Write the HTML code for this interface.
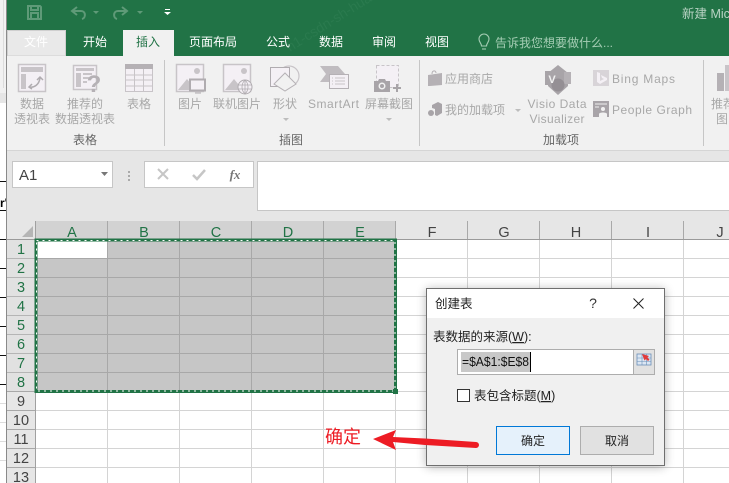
<!DOCTYPE html>
<html><head><meta charset="utf-8">
<style>
html,body{margin:0;padding:0;background:#fff;width:729px;height:483px;overflow:hidden}
svg{display:block;font-family:"Liberation Sans","Noto Sans CJK SC",sans-serif;font-size:12px}
.m{text-anchor:middle}
.r{fill:#a8a8a8}
.g{fill:#666}
.tab{fill:#fff;text-anchor:middle}
.ic{fill:#f4f0f5;stroke:#c8c4c8;stroke-width:1.5}
.if{fill:#c8c4c8;stroke:none}
.ch{font-size:14.5px;text-anchor:middle;fill:#217346}
.cn{font-size:14.5px;text-anchor:middle;fill:#444}
</style></head><body>
<svg width="729" height="483" viewBox="0 0 729 483" xmlns="http://www.w3.org/2000/svg">
<!-- left strip -->
<rect x="0" y="0" width="7" height="93" fill="#f1f1f1"/>
<rect x="3" y="0" width="1" height="88" fill="#dcdcdc"/>
<rect x="0" y="93" width="7" height="10" fill="#e6e6e6"/>
<g fill="#111"><rect x="0" y="181" width="7" height="1"/><rect x="0" y="210" width="7" height="1"/><rect x="0" y="239" width="7" height="1"/><rect x="0" y="268" width="7" height="1"/><rect x="0" y="297" width="7" height="1"/><rect x="0" y="326" width="7" height="1"/><rect x="0" y="355" width="7" height="1"/><rect x="0" y="384" width="7" height="1"/></g>
<g fill="#ddd"><rect x="0" y="403" width="7" height="1"/><rect x="0" y="422" width="7" height="1"/><rect x="0" y="441" width="7" height="1"/><rect x="0" y="460" width="7" height="1"/></g>
<text x="0" y="207" font-size="12" font-weight="bold" fill="#000">r'</text>
<rect x="6" y="0" width="1" height="483" fill="#8a8a8a"/>

<!-- title bar -->
<rect x="7" y="0" width="722" height="56" fill="#217346"/>
<g fill="none" stroke="#5f9a78" stroke-width="2">
<path d="M28 6h12l1 1v12H28z"/><path d="M31 6v4h7V6"/><path d="M31 19v-6h7v6"/>
<path d="M77 7l-5 4 5 4M72 11h9c5 0 5 7 1 8"/>
<path d="M122 7l5 4-5 4M127 11h-9c-5 0-5 7-1 8"/>
</g>
<path d="M93 11h6l-3 3zM137 11h6l-3 3z" fill="#5f9a78"/>
<path d="M165 9h5v1h-5zM164 12h7l-3.5 3z" fill="#fff"/>
<text x="682" y="18" fill="#b9d3c4" font-size="12.5">新建 Mic</text>
<text x="290" y="52" fill="#2a7a4e" font-size="14" transform="rotate(-32 290 52)">n1-csdn-sh-huang</text>

<!-- tabs -->
<rect x="7.500" y="30.500" width="58" height="25.500" fill="#e9e9e9" stroke="#cfcfcf"/>
<text x="36" y="46" class="tab">文件</text>
<rect x="123" y="30" width="51" height="26" fill="#f1f1f1"/>
<text x="148" y="46" class="m" fill="#217346">插入</text>
<text x="95" y="46" class="tab">开始</text>
<text x="213" y="46" class="tab">页面布局</text>
<text x="278" y="46" class="tab">公式</text>
<text x="331" y="46" class="tab">数据</text>
<text x="384" y="46" class="tab">审阅</text>
<text x="437" y="46" class="tab">视图</text>
<g fill="none" stroke="#a5cdb4" stroke-width="1.1"><path d="M481.500 46c0-3-2.500-3.500-2.500-7a5 5 0 0 1 10 0c0 3.500-2.500 4-2.500 7z"/><path d="M482 49h4"/></g>
<text x="495" y="47" fill="#a5cdb4">告诉我您想要做什么...</text>

<!-- ribbon -->
<rect x="7" y="56" width="722" height="94" fill="#f1f1f1"/>
<rect x="7" y="150" width="722" height="1" fill="#d5d5d5"/>
<g fill="#c6c6c6"><rect x="164" y="60" width="1" height="86"/><rect x="419" y="60" width="1" height="86"/><rect x="703" y="60" width="1" height="86"/></g>

<!-- pivot icon -->
<rect x="18.500" y="64.500" width="27" height="27" class="ic"/>
<rect x="21" y="67" width="22" height="5" class="if"/><rect x="21" y="74" width="5" height="15" class="if"/>
<path d="M29 87c5 1 10-2 11-9M37 80l3-3 3 3M32 84l-3 3 3 2" fill="none" stroke="#b0acb0" stroke-width="1.500"/>
<!-- recommended pivot -->
<rect x="73.500" y="65.500" width="23" height="24" class="ic"/>
<rect x="76" y="68" width="18" height="3" class="if"/><rect x="76" y="73" width="5" height="14" class="if"/><path d="M83 73h9v2h-9zM83 77h6v2h-6zM83 81h4v2h-4z" class="if"/>
<text x="94" y="92" class="m" font-size="24" font-weight="bold" fill="#b5b1b5">?</text>
<!-- table icon -->
<rect x="125.500" y="64.500" width="27" height="27" fill="#f4f0f5" stroke="#c8c4c8"/>
<rect x="125" y="64" width="28" height="5" fill="#b5b1b5"/>
<path d="M125 75h28M125 80h28M125 86h28M134.500 69v22M143.500 69v22" stroke="#c8c4c8" fill="none"/>
<!-- picture -->
<rect x="176.500" y="64.500" width="27" height="27" class="ic" stroke-width="1"/>
<circle cx="197" cy="71" r="3" class="if"/><path d="M178 90l9-11 9 11z" class="if"/>
<rect x="190" y="79.500" width="15" height="11" fill="#f4f0f5" stroke="#b0acb0" stroke-width="2"/><path d="M195 93h6" stroke="#b0acb0"/>
<!-- online pic -->
<rect x="223.500" y="64.500" width="27" height="27" class="ic" stroke-width="1"/>
<circle cx="244" cy="71" r="3" class="if"/><path d="M225 90l9-11 9 11z" class="if"/>
<circle cx="245" cy="87" r="7" fill="#f4f0f5" stroke="#b0acb0"/><path d="M238 85h14M238 89h14M245 80v14M245 80c-4 4-4 10 0 14M245 80c4 4 4 10 0 14" fill="none" stroke="#b0acb0" stroke-width=".8"/>
<!-- shapes -->
<circle cx="289" cy="76" r="10" fill="none" stroke="#c8c4c8" stroke-width="1.200"/>
<rect x="270.500" y="67.500" width="19" height="19" fill="#f4f0f5" stroke="#b0acb0"/>
<path d="M285 74l11 11-11 7-11-7z" fill="#f1f1f1" stroke="#b5b1b5" transform="translate(0 -1)"/>
<!-- smartart -->
<path d="M320 66h18l7 8-7 8h-18l6-8z" fill="#c0bcc0"/>
<rect x="329.500" y="74.500" width="19" height="14" fill="#f4f0f5" stroke="#b5b1b5"/><path d="M335 78h10M335 81h10M335 84h10M332 78h1M332 81h1M332 84h1" stroke="#c8c4c8"/>
<!-- screenshot -->
<rect x="376.500" y="65.500" width="22" height="22" fill="#f4f0f5" stroke="#c8c4c8" stroke-dasharray="3 2"/>
<path d="M374 81h4l1-2h6l1 2h4v11h-16z" fill="#a8a4a8"/><circle cx="382" cy="86" r="3.500" fill="#f1f1f1"/><circle cx="382" cy="86" r="2" fill="#a8a4a8"/>
<path d="M393 88h8M397 84v8" stroke="#a8a4a8" stroke-width="2"/>
<!-- store -->
<path d="M428 75l14-2v12l-12 1h-2z" fill="#b5b1b5"/><path d="M432 74c0-4 4-4 4-1" fill="none" stroke="#b5b1b5"/>
<!-- addins -->
<path d="M432 105l6-3 4 2v9l-5 3-2-1v-6l-3-1z" fill="#a8a4a8"/><circle cx="431" cy="113" r="3" fill="#a8a4a8"/>
<!-- visio -->
<path d="M558 65l10 8v13l-10 9-10-9V73z" fill="#a8a4a8"/>
<rect x="545" y="71" width="14" height="14" fill="#a8a4a8"/><rect x="564" y="72" width="7" height="12" fill="#b5b1b5"/><circle cx="558" cy="85" r="6.500" fill="#948f94"/>
<text x="552" y="83" class="m" font-size="11" font-weight="bold" fill="#f1f1f1">V</text>
<!-- bing -->
<rect x="593" y="70" width="16" height="16" fill="#d8d4d8"/><path d="M597 72l3 1v8l4-2-2-1-1-3 6 3v2l-7 4-3-2z" fill="#f4f0f5"/>
<!-- people -->
<rect x="593" y="101" width="16" height="16" fill="#a8a4a8"/><path d="M595 104h12M595 107h4" stroke="#f1f1f1"/><circle cx="603" cy="109" r="2" fill="#f1f1f1"/><path d="M599 117v-3c0-2 8-2 8 0v3z" fill="#f1f1f1"/>
<!-- right clipped -->
<rect x="717" y="73" width="7" height="18" fill="#b5b1b5"/><rect x="725" y="65" width="4" height="26" fill="#c8c4c8"/>

<text x="32" y="108" class="m r">数据</text><text x="32" y="123" class="m r">透视表</text>
<text x="85" y="108" class="m r">推荐的</text><text x="85" y="123" class="m r">数据透视表</text>
<text x="139" y="108" class="m r">表格</text>
<text x="190" y="108" class="m r">图片</text>
<text x="237" y="108" class="m r">联机图片</text>
<text x="285" y="108" class="m r">形状</text>
<text x="308" y="108" class="r" textLength="51" font-size="12">SmartArt</text>
<text x="389" y="108" class="m r">屏幕截图</text>
<path d="M283 118h6l-3 3zM386 118h6l-3 3zM515 109h6l-3 3z" fill="#bdbdbd"/>
<text x="445" y="83" class="r">应用商店</text>
<text x="445" y="114" class="r">我的加载项</text>
<text x="557" y="108" class="m r" textLength="59">Visio Data</text>
<text x="557" y="123" class="m r" textLength="55">Visualizer</text>
<text x="612" y="83" class="r" textLength="63">Bing Maps</text>
<text x="612" y="114" class="r" textLength="80">People Graph</text>
<text x="711" y="108" class="r">推荐</text><text x="722" y="123" class="m r">图</text>
<text x="85" y="144" class="m g">表格</text>
<text x="291" y="144" class="m g">插图</text>
<text x="561" y="144" class="m g">加载项</text>

<!-- formula bar -->
<rect x="7" y="151" width="722" height="70" fill="#e6e6e6"/>
<rect x="12.500" y="161.500" width="100" height="26" fill="#fff" stroke="#c6c6c6"/>
<text x="19" y="180" font-size="15" fill="#444">A1</text>
<path d="M101 172h7l-3.500 4z" fill="#777"/>
<path d="M128 171h2v2h-2zM128 175h2v2h-2zM128 179h2v2h-2z" fill="#aaa"/>
<rect x="144.500" y="161.500" width="109" height="26" fill="#fff" stroke="#c6c6c6"/>
<path d="M158 169l10 10M168 169l-10 10" stroke="#c6c6c6" stroke-width="2" fill="none"/>
<path d="M193 175l4 4 8-9" stroke="#c6c6c6" stroke-width="2.500" fill="none"/>
<text x="235" y="179" class="m" font-family="Liberation Serif" font-style="italic" font-weight="bold" font-size="13" fill="#777">fx</text>
<rect x="257.500" y="161.500" width="480" height="49" fill="#fff" stroke="#c6c6c6"/>

<!-- headers -->
<rect x="7" y="221" width="722" height="18" fill="#e6e6e6"/>
<rect x="36" y="221" width="360" height="18" fill="#d2d2d2"/>
<rect x="7" y="239" width="29" height="153" fill="#e1e1e1"/>
<rect x="7" y="392" width="29" height="91" fill="#e6e6e6"/>
<path d="M33 226v11H22z" fill="#b5b5b5"/>

<!-- grid -->
<rect x="36" y="239" width="360" height="153" fill="#c6c6c6"/>
<rect x="36" y="239" width="71" height="19" fill="#fff"/>
<g stroke="#d4d4d4" fill="none">
<path d="M396 258.500H729M396 277.500H729M396 296.500H729M396 315.500H729M396 334.500H729M396 353.500H729M396 372.500H729M396 391.500H729M36 410.500H729M36 429.500H729M36 448.500H729M36 467.500H729"/>
<path d="M107.500 392V483M179.500 392V483M251.500 392V483M323.500 392V483M395.500 392V483M467.500 239V483M539.500 239V483M611.500 239V483M683.500 239V483"/>
</g>
<g stroke="#a8a8a8" fill="none">
<path d="M36 258.500H396M36 277.500H396M36 296.500H396M36 315.500H396M36 334.500H396M36 353.500H396M36 372.500H396"/>
<path d="M107.500 239V392M179.500 239V392M251.500 239V392M323.500 239V392"/>
</g>
<g stroke="#a9a9a9"><path d="M107.500 221V239M179.500 221V239M251.500 221V239M323.500 221V239M395.500 221V239M467.500 221V239M539.500 221V239M611.500 221V239M683.500 221V239"/></g>
<path d="M7 239.500H729" stroke="#9a9a9a"/>
<path d="M35.500 221V483" stroke="#a0a0a0"/>
<g stroke="#b5b5b5"><path d="M7 258.500h28M7 277.500h28M7 296.500h28M7 315.500h28M7 334.500h28M7 353.500h28M7 372.500h28"/></g>
<g stroke="#a8a8a8"><path d="M7 391.500h28M7 410.500h28M7 429.500h28M7 448.500h28M7 467.500h28"/></g>

<text x="72" y="237" class="ch">A</text><text x="144" y="237" class="ch">B</text><text x="216" y="237" class="ch">C</text><text x="288" y="237" class="ch">D</text><text x="360" y="237" class="ch">E</text>
<text x="432" y="237" class="cn">F</text><text x="504" y="237" class="cn">G</text><text x="576" y="237" class="cn">H</text><text x="648" y="237" class="cn">I</text><text x="720" y="237" class="cn">J</text>
<text x="21" y="254" class="ch">1</text><text x="21" y="273" class="ch">2</text><text x="21" y="292" class="ch">3</text><text x="21" y="311" class="ch">4</text><text x="21" y="330" class="ch">5</text><text x="21" y="349" class="ch">6</text><text x="21" y="368" class="ch">7</text><text x="21" y="387" class="ch">8</text>
<text x="21" y="406" class="cn">9</text><text x="21" y="425" class="cn">10</text><text x="21" y="444" class="cn">11</text><text x="21" y="463" class="cn">12</text><text x="21" y="482" class="cn">13</text>

<!-- selection marching ants -->
<rect x="36" y="240" width="359.500" height="151.500" fill="none" stroke="#217346" stroke-width="3"/>
<rect x="36.500" y="240.500" width="358.500" height="150.500" fill="none" stroke="#fff" stroke-width="1" stroke-dasharray="2 4"/>
<rect x="393" y="389" width="5" height="5" fill="#217346"/>

<!-- dialog -->
<defs><filter id="s" x="-15%" y="-15%" width="130%" height="130%"><feGaussianBlur stdDeviation="5"/></filter></defs>
<rect x="426" y="289" width="239" height="178" fill="#000" opacity=".28" filter="url(#s)"/>
<rect x="426.500" y="288.500" width="238" height="177" fill="#f0f0f0" stroke="#6f6f6f"/>
<rect x="427" y="289" width="237" height="29" fill="#fff"/>
<text x="435" y="308" font-size="12.500" fill="#222">创建表</text>
<text x="593" y="308" class="m" font-size="14" fill="#333">?</text>
<path d="M633.500 298.500l10 10M643.500 298.500l-10 10" stroke="#222" stroke-width="1" fill="none"/>
<text x="433" y="341" font-size="12.500" fill="#222">表数据的来源(<tspan text-decoration="underline">W</tspan>):</text>
<rect x="457.500" y="349.500" width="197" height="25" fill="#fff" stroke="#adadad"/>
<rect x="633" y="350" width="21" height="24" fill="#e1e1e1"/><path d="M633.500 350v24" stroke="#adadad"/>
<rect x="637" y="354" width="14" height="11" fill="#dbe6f3" stroke="#6b8fb8" stroke-width=".8"/><path d="M637 358h14M637 361.500h14M642 354v11M646.500 354v11" stroke="#6b8fb8" stroke-width=".6"/>
<path d="M642 354l7 2-1.500 1.500 2 2-1.500 1.500-2-2-1.500 1.500z" fill="#e23a3a"/>
<rect x="461" y="352" width="69" height="20" fill="#c8c8c8"/>
<text x="462" y="366" font-size="12.500" fill="#111" textLength="67" lengthAdjust="spacingAndGlyphs">=$A$1:$E$8</text>
<rect x="530" y="352" width="1" height="20" fill="#000"/>
<rect x="457.500" y="389.500" width="12" height="12" fill="#fff" stroke="#333"/>
<text x="474" y="400" font-size="12.500" fill="#222">表包含标题(<tspan text-decoration="underline">M</tspan>)</text>
<rect x="496.500" y="426.500" width="73" height="28" fill="#e5f1fb" stroke="#0078d7"/>
<text x="533" y="445" class="m" fill="#222">确定</text>
<rect x="580.500" y="426.500" width="73" height="28" fill="#e1e1e1" stroke="#adadad"/>
<text x="617" y="445" class="m" fill="#222">取消</text>

<!-- annotation -->
<text x="325" y="443" font-size="18" fill="#ed1c24">确定</text>
<path d="M373 439L396 430 393 437 425 438.500 476 442A3 3 0 0 1 476 448L425 445 393 442 396 450z" fill="#ed1c24"/>
</svg>
</body></html>
